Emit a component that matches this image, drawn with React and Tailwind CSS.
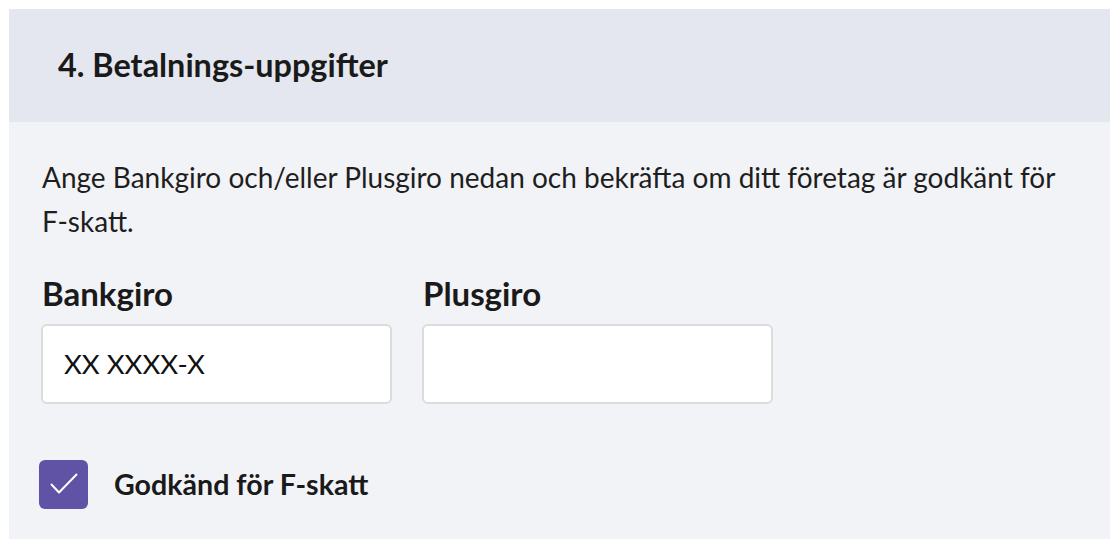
import React, { useState } from "react";

export default function App() {
  const [bankgiro, setBankgiro] = useState("XX XXXX-X");
  const [plusgiro, setPlusgiro] = useState("");
  const [fskatt, setFskatt] = useState(true);

  return (
    <div
      className="min-h-screen bg-white p-[9px]"
      style={{ fontFamily: "Lato, 'Noto Sans', sans-serif" }}
    >
      <div className="w-[1101px] bg-[#f2f3f7] text-[#1a1a1a]">
        {/* Header */}
        <div className="h-[113px] bg-[#e4e7f0] flex items-center pl-[49px]">
          <h2 className="text-[32.4px] font-bold">4. Betalnings-uppgifter</h2>
        </div>

        {/* Body */}
        <div className="pl-[33px] pr-[40px] pt-[33px] pb-[30px]">
          <p className="text-[28px] leading-[44.4px] text-[#1e1e1e]">
            Ange Bankgiro och/eller Plusgiro nedan och bekräfta om ditt företag är godkänt för F-skatt.
          </p>

          <div className="flex gap-[30px] mt-[29px] -ml-px">
            <div className="flex flex-col">
              <label className="text-[33px] font-bold leading-[40px] mb-[11px] ml-px">
                Bankgiro
              </label>
              <input
                type="text"
                value={bankgiro}
                onChange={(e) => setBankgiro(e.target.value)}
                className="w-[351px] h-[80px] bg-white border-2 border-[#dcdcdc] rounded-[6px] px-[21px] text-[27.5px] text-[#111] focus:outline-none"
              />
            </div>
            <div className="flex flex-col">
              <label className="text-[33px] font-bold leading-[40px] mb-[11px] ml-px">
                Plusgiro
              </label>
              <input
                type="text"
                value={plusgiro}
                onChange={(e) => setPlusgiro(e.target.value)}
                className="w-[351px] h-[80px] bg-white border-2 border-[#dcdcdc] rounded-[6px] px-[21px] text-[27.5px] text-[#111] focus:outline-none"
              />
            </div>
          </div>

          {/* Checkbox */}
          <label className="flex items-center gap-[26px] mt-[56px] -ml-[3px] cursor-pointer w-fit">
            <button
              type="button"
              onClick={() => setFskatt(!fskatt)}
              className={`w-[49px] h-[49px] rounded-[6px] flex items-center justify-center ${
                fskatt ? "bg-[#6052a4]" : "bg-white border-2 border-[#dcdcdc]"
              }`}
            >
              {fskatt && (
                <svg width="28" height="22" viewBox="0 0 28 22" fill="none">
                  <path
                    d="M1.5 11.5 L9 19.5 L26.5 1.5"
                    stroke="white"
                    strokeWidth="2"
                    strokeLinecap="round"
                    strokeLinejoin="round"
                  />
                </svg>
              )}
            </button>
            <span className="text-[28.6px] font-bold">Godkänd för F-skatt</span>
          </label>
        </div>
      </div>
    </div>
  );
}
